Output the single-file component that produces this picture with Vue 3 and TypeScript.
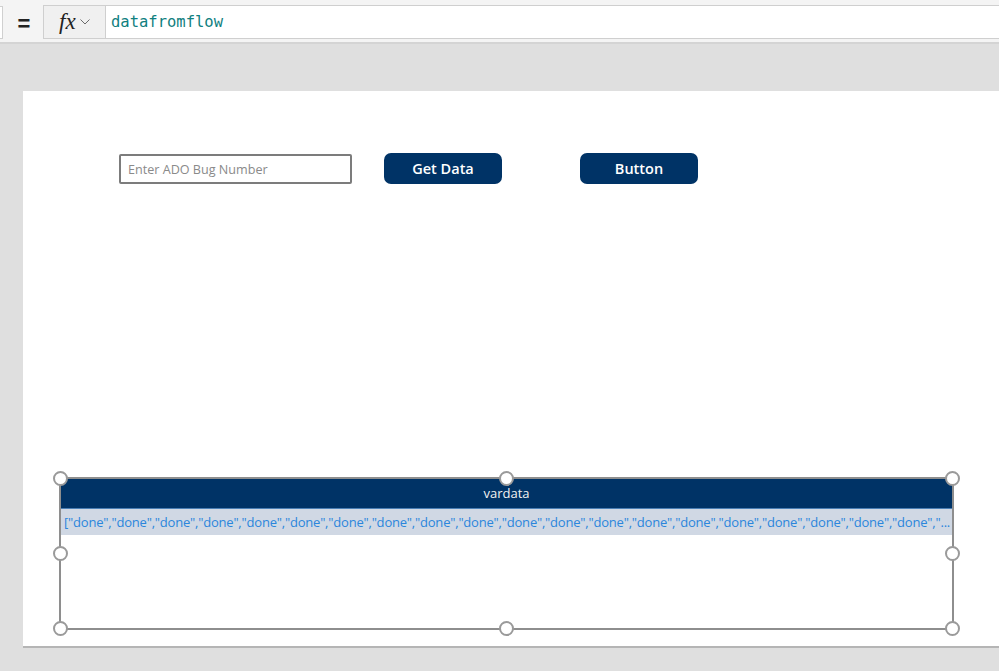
<script setup lang="ts">
const handles = [
  { x: 0, y: 0 },
  { x: 50, y: 0 },
  { x: 100, y: 0 },
  { x: 0, y: 50 },
  { x: 100, y: 50 },
  { x: 0, y: 100 },
  { x: 50, y: 100 },
  { x: 100, y: 100 },
];
const cell = "[" + Array(20).fill('"done"').join(",") + ',"...';
</script>

<template>
  <div class="studio">
    <div class="formula-bar">
      <div class="property-stub"></div>
      <div class="equals">=</div>
      <div class="formula-box">
        <div class="fx-button">
          <span class="fx"><i>fx</i></span>
          <svg class="chevron" width="10" height="6" viewBox="0 0 10 6">
            <path d="M0.5 0.5 L5 5 L9.5 0.5" fill="none" stroke="#6b6b6b" stroke-width="1" />
          </svg>
        </div>
        <div class="formula-text">datafromflow</div>
      </div>
    </div>

    <div class="workspace">
      <div class="canvas">
        <input class="text-input" type="text" placeholder="Enter ADO Bug Number" />
        <button class="app-button get-data">Get Data</button>
        <button class="app-button other">Button</button>

        <div class="table-control">
          <div class="table-head">vardata</div>
          <div class="table-row">{{ cell }}</div>
          <div class="handles">
            <span
              v-for="(h, i) in handles"
              :key="i"
              class="handle"
              :style="{ left: h.x + '%', top: h.y + '%' }"
            ></span>
          </div>
        </div>
      </div>
    </div>
  </div>
</template>

<style>
html,
body {
  margin: 0;
  padding: 0;
  overflow: hidden;
}
</style>

<style scoped>
.studio {
  width: 999px;
  height: 671px;
  display: flex;
  flex-direction: column;
  background: #dfdfdf;
  font-family: "Open Sans", "Noto Sans", sans-serif;
  overflow: hidden;
}

.formula-bar {
  height: 44px;
  flex-shrink: 0;
  display: flex;
  align-items: flex-start;
  padding-top: 5px;
  box-sizing: border-box;
  background: #f4f4f4;
  border-bottom: 2px solid #d4d4d4;
}

.property-stub {
  width: 3px;
  height: 33px;
  margin-top: 1px;
  background: #fff;
  border: 1px solid #d0d0d0;
  border-left: 0;
  box-sizing: border-box;
}

.equals {
  width: 40px;
  box-sizing: border-box;
  padding-left: 2px;
  text-align: center;
  font-size: 22px;
  font-weight: 700;
  line-height: 37px;
  color: #222;
  font-family: "Liberation Sans", sans-serif;
}

.formula-box {
  flex: 1;
  height: 34px;
  display: flex;
  box-sizing: border-box;
  border: 1px solid #cfcfcf;
  border-right: 0;
  background: #fff;
}

.fx-button {
  width: 62px;
  display: flex;
  align-items: center;
  box-sizing: border-box;
  padding-left: 15px;
  background: #f0f0f0;
  border-right: 1px solid #cfcfcf;
}

.fx {
  font-family: "Liberation Serif", serif;
  font-size: 23px;
  line-height: 30px;
  color: #222;
  margin-right: 4px;
}

.chevron {
  margin-top: -1px;
}

.formula-text {
  padding-left: 5px;
  font-family: "DejaVu Sans Mono", monospace;
  font-size: 15.5px;
  line-height: 32px;
  color: #108080;
}

.workspace {
  flex: 1;
  padding: 47px 0 23px 23px;
  min-height: 0;
  display: flex;
}

.canvas {
  position: relative;
  flex: 1;
  background: #fff;
  border-bottom: 2px solid #b5b5b5;
}

.text-input {
  position: absolute;
  left: 96px;
  top: 63px;
  width: 233px;
  height: 30px;
  box-sizing: border-box;
  padding: 0 7px;
  border: 2px solid #7c7c7c;
  border-radius: 2px;
  outline: none;
  background: #fff;
  font-family: inherit;
  font-size: 12.6px;
}

.text-input::placeholder {
  color: #8a8a8a;
  opacity: 1;
}

.app-button {
  position: absolute;
  top: 62px;
  width: 118px;
  height: 31px;
  border: 0;
  border-radius: 7px;
  background: #003366;
  color: #fff;
  font-family: inherit;
  font-size: 14.5px;
  font-weight: 600;
  padding: 0;
}

.get-data {
  left: 361px;
}

.other {
  left: 557px;
}

.table-control {
  position: absolute;
  left: 36px;
  top: 386px;
  width: 895px;
  height: 153px;
  box-sizing: border-box;
  border: 2px solid #8e8e8e;
}

.table-head {
  height: 29px;
  background: #003366;
  color: #f2f2f2;
  font-size: 13px;
  line-height: 29px;
  text-align: center;
  border-bottom: 1px solid #4a7fb5;
}

.table-row {
  height: 26px;
  padding: 0 0 0 3px;
  background: #d0d8e4;
  line-height: 26px;
  font-size: 13px;
  letter-spacing: -0.2px;
  color: #2b86dc;
  overflow: hidden;
  white-space: nowrap;
}

.handles {
  position: absolute;
  inset: -0.5px;
}

.handle {
  position: absolute;
  width: 15px;
  height: 15px;
  margin: -7.5px 0 0 -7.5px;
  box-sizing: border-box;
  border: 2px solid #9a9a9a;
  border-radius: 50%;
  background: #fff;
}
</style>
